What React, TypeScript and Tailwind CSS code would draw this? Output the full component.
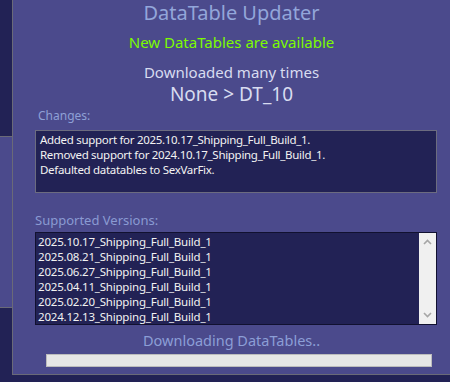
import React from "react";

const font = { fontFamily: '"Noto Sans", "Open Sans", sans-serif' };

const versions = [
  "2025.10.17_Shipping_Full_Build_1",
  "2025.08.21_Shipping_Full_Build_1",
  "2025.06.27_Shipping_Full_Build_1",
  "2025.04.11_Shipping_Full_Build_1",
  "2025.02.20_Shipping_Full_Build_1",
  "2024.12.13_Shipping_Full_Build_1",
];

function Chevron({ up }: { up: boolean }) {
  return (
    <svg width="9" height="6" viewBox="0 0 9 6">
      <path
        d={up ? "M1 5 L4.5 1.5 L8 5" : "M1 1 L4.5 4.5 L8 1"}
        fill="none"
        stroke="#a6a6a6"
        strokeWidth="1.6"
      />
    </svg>
  );
}

export default function App() {
  return (
    <div className="w-[450px] h-[382px] bg-[#222255] flex overflow-hidden" style={font}>
      <div className="w-[12px] flex flex-col shrink-0">
        <div className="h-[136px] bg-[#222255]" />
        <div className="h-[172px] bg-[#4b4a8c] border-y border-[#6a6a78]" />
        <div className="flex-1 bg-[#222255]" />
      </div>
      <div className="w-[438px] h-[375px] bg-[#4b4a8c] border-l border-b border-[#6a6a78] flex flex-col">
        <div className="h-[28px] pt-[1px] text-center text-[20px] leading-[24px] text-[#93a6da]">
          DataTable Updater
        </div>
        <div className="h-[28px] text-center text-[15px] leading-[28px] text-[#7cfc00]">
          New DataTables are available
        </div>
        <div className="h-[27px] pt-[5px] text-center text-[15px] leading-[22px] text-[#d8dcf0]">
          Downloaded many times
        </div>
        <div className="h-[22px] text-center text-[19px] leading-[22px] text-[#d8dcf0]">
          None &gt; DT_10
        </div>
        <div className="h-[22px] pl-[25px] text-[12px] leading-[22px] text-[#8ea0d6]">
          Changes:
        </div>
        <div className="ml-[22px] mt-[3px] w-[402px] h-[63px] bg-[#222255] border border-[#6c6c80] px-[4px] pt-[1px] text-[11.5px] tracking-[-0.3px] leading-[15px] text-[#f2f2f2]">
          <div>Added support for 2025.10.17_Shipping_Full_Build_1.</div>
          <div>Removed support for 2024.10.17_Shipping_Full_Build_1.</div>
          <div>Defaulted datatables to SexVarFix.</div>
        </div>
        <div className="h-[39px] pl-[22px] pt-[17px] text-[13px] leading-[20px] text-[#8a9ad2]">
          Supported Versions:
        </div>
        <div className="ml-[22px] w-[402px] h-[93px] bg-[#222255] border border-[#111130] flex">
          <div className="flex-1 pl-[2px] pt-[1px] text-[11.5px] tracking-[-0.2px] leading-[15px] text-[#f2f2f2]">
            {versions.map((v) => (
              <div key={v}>{v}</div>
            ))}
          </div>
          <div className="w-[17px] bg-[#f0f0f0] flex flex-col items-center justify-between py-[6px]">
            <Chevron up={true} />
            <Chevron up={false} />
          </div>
        </div>
        <div className="h-[29px] text-center text-[14.5px] leading-[30px] text-[#8c9ed6]">
          Downloading DataTables..
        </div>
        <div className="ml-[33px] w-[386px] h-[13px] bg-[#e6e6e6] border border-[#bcbcbc]" />
      </div>
    </div>
  );
}
